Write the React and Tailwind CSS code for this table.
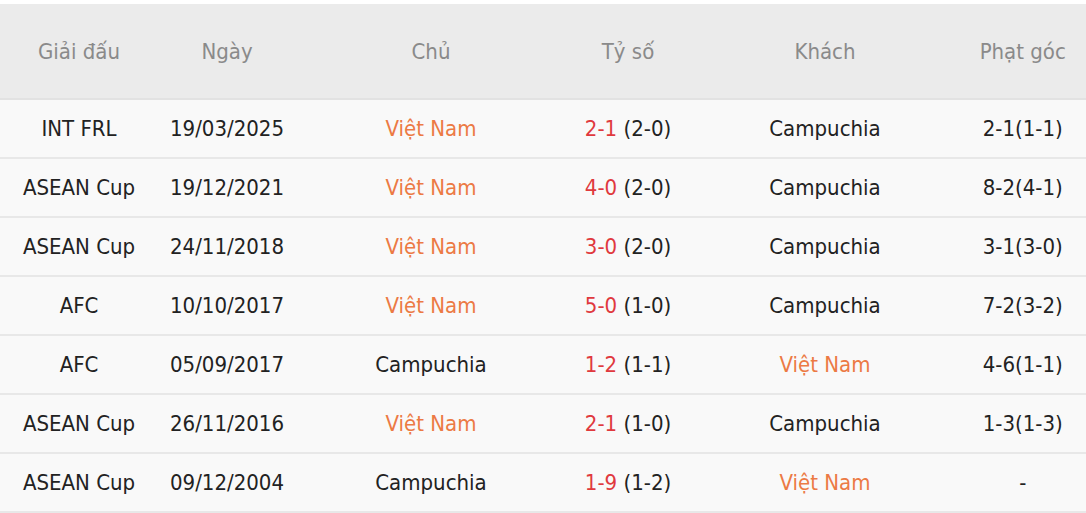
import React from "react";

const rows = [
  { league: "INT FRL", date: "19/03/2025", home: "Việt Nam", score: "2-1", ht: "(2-0)", away: "Campuchia", corner: "2-1(1-1)" },
  { league: "ASEAN Cup", date: "19/12/2021", home: "Việt Nam", score: "4-0", ht: "(2-0)", away: "Campuchia", corner: "8-2(4-1)" },
  { league: "ASEAN Cup", date: "24/11/2018", home: "Việt Nam", score: "3-0", ht: "(2-0)", away: "Campuchia", corner: "3-1(3-0)" },
  { league: "AFC", date: "10/10/2017", home: "Việt Nam", score: "5-0", ht: "(1-0)", away: "Campuchia", corner: "7-2(3-2)" },
  { league: "AFC", date: "05/09/2017", home: "Campuchia", score: "1-2", ht: "(1-1)", away: "Việt Nam", corner: "4-6(1-1)" },
  { league: "ASEAN Cup", date: "26/11/2016", home: "Việt Nam", score: "2-1", ht: "(1-0)", away: "Campuchia", corner: "1-3(1-3)" },
  { league: "ASEAN Cup", date: "09/12/2004", home: "Campuchia", score: "1-9", ht: "(1-2)", away: "Việt Nam", corner: "-" },
];

const teamClass = (name) =>
  name === "Việt Nam" ? "text-[#ec7a44]" : "text-[#222222]";

export default function App() {
  return (
    <div
      className="w-[1086px] h-[513px] bg-white pt-[4px] overflow-hidden"
      style={{ fontFamily: '"DejaVu Sans Condensed", "DejaVu Sans", Tahoma, sans-serif' }}
    >
      <table className="w-[1086px] table-fixed border-collapse text-[22px] border-r border-[#eeeeee]">
        <colgroup>
          <col className="w-[158px]" />
          <col className="w-[138px]" />
          <col className="w-[270px]" />
          <col className="w-[124px]" />
          <col className="w-[270px]" />
          <col className="w-[126px]" />
        </colgroup>
        <thead>
          <tr className="h-[95px] bg-[#ebebeb] text-[#8a8a8a] border-b-2 border-[#e2e2e2]">
            <th className="font-normal text-center">Giải đấu</th>
            <th className="font-normal text-center">Ngày</th>
            <th className="font-normal text-center">Chủ</th>
            <th className="font-normal text-center">Tỷ số</th>
            <th className="font-normal text-center">Khách</th>
            <th className="font-normal text-center">Phạt góc</th>
          </tr>
        </thead>
        <tbody>
          {rows.map((r, i) => (
            <tr key={i} className="h-[59px] bg-[#f9f9f9] text-[#222222] border-b-2 border-[#e8e8e8]">
              <td className="text-center">{r.league}</td>
              <td className="text-center">{r.date}</td>
              <td className={`text-center ${teamClass(r.home)}`}>{r.home}</td>
              <td className="text-center whitespace-nowrap">
                <span className="text-[#e0393e]">{r.score}</span> {r.ht}
              </td>
              <td className={`text-center ${teamClass(r.away)}`}>{r.away}</td>
              <td className="text-center">{r.corner}</td>
            </tr>
          ))}
        </tbody>
      </table>
    </div>
  );
}
